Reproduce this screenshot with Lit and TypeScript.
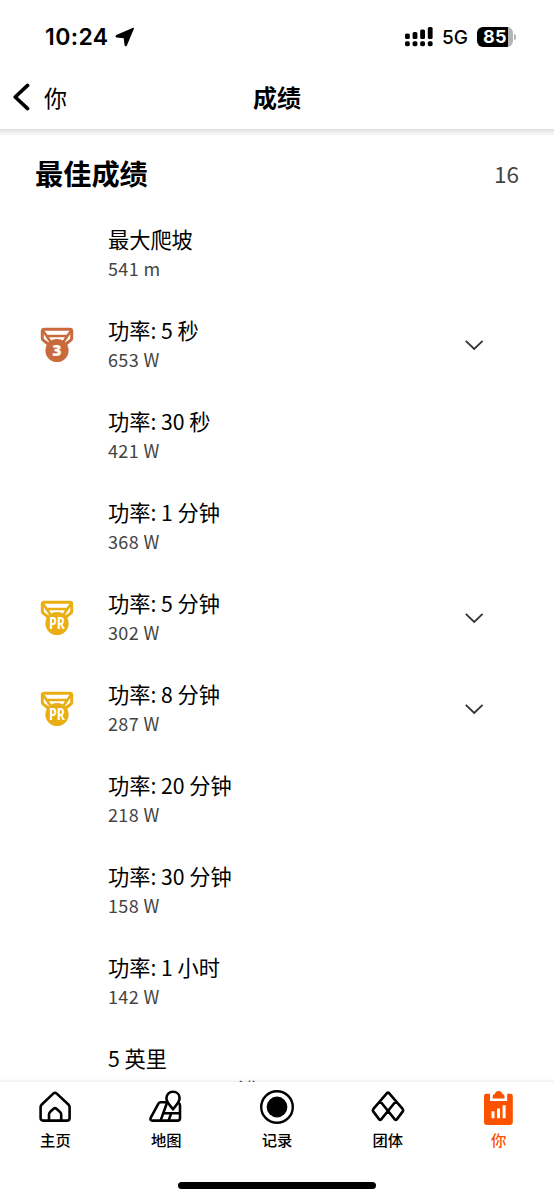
import { LitElement, html, svg, css, nothing } from "lit";
import { customElement, property } from "lit/decorators.js";

interface Effort {
  title: string;
  value: string;
  medal?: "3" | "PR";
}

const EFFORTS: Effort[] = [
  { title: "最大爬坡", value: "541 m" },
  { title: "功率: 5 秒", value: "653 W", medal: "3" },
  { title: "功率: 30 秒", value: "421 W" },
  { title: "功率: 1 分钟", value: "368 W" },
  { title: "功率: 5 分钟", value: "302 W", medal: "PR" },
  { title: "功率: 8 分钟", value: "287 W", medal: "PR" },
  { title: "功率: 20 分钟", value: "218 W" },
  { title: "功率: 30 分钟", value: "158 W" },
  { title: "功率: 1 小时", value: "142 W" },
  { title: "5 英里", value: "16:04 - 50.04 mi/h" },
];

@customElement("status-bar")
class StatusBar extends LitElement {
  static styles = css`
    :host { display: flex; height: 74px; align-items: center; padding: 0 38px 0 45px; box-sizing: border-box; font-family: Inter, sans-serif; color: #000; }
    .time { font-size: 23px; font-weight: 600; letter-spacing: 0.4px; }
    .arrow { margin-left: 6px; }
    .signal { margin-left: auto; }
    .net { font-size: 19px; font-weight: 500; margin: 0 9px 0 9px; }
    .batt { display: flex; align-items: center; }
    .cell { width: 36px; height: 20px; border-radius: 6px; background: linear-gradient(90deg, #000 31px, #b4b4b4 31px); color: #fff; font-size: 18px; font-weight: 700; line-height: 20px; text-align: center; letter-spacing: 0.3px; }
    .cap { width: 2px; height: 6px; margin-left: 1px; border-radius: 0 2px 2px 0; background: #b4b4b4; }
  `;
  render() {
    const xs = [0, 7.6, 15.2, 22.8];
    const tops = [6.5, 5, 2.5, 0];
    return html`
      <span class="time">10:24</span>
      <svg class="arrow" width="20" height="20" viewBox="0 0 20 20"><path d="M18.4 1.3 11.3 18.2Q10.7 19.2 10.2 18.2L9.3 10.7 1.6 9.8Q.6 9.3 1.6 8.7Z" fill="#000" stroke="#000" stroke-width="1.3" stroke-linejoin="round" /></svg>
      <svg class="signal" width="28" height="20" viewBox="0 0 28 20">
        ${xs.map((x, i) => svg`<rect x=${x} y=${tops[i]} width="4.8" height=${12 - tops[i]} rx="1.5"/><rect x=${x} y="14.2" width="4.8" height="5" rx="1.6"/>`)}
      </svg>
      <span class="net">5G</span>
      <span class="batt"><span class="cell">85</span><span class="cap"></span></span>
    `;
  }
}

@customElement("medal-icon")
class MedalIcon extends LitElement {
  @property() kind: "3" | "PR" = "3";
  static styles = css`
    :host { display: block; width: 34px; height: 36px; }
    svg { display: block; }
    text { font-family: "Open Sans", sans-serif; font-weight: 800; text-anchor: middle; fill: #fff; }
    .third { color: #c96a3c; }
    .pr { color: #e9ae13; }
    .n { font-size: 16px; }
    .p { font-size: 15.5px; font-weight: 700; }
  `;
  render() {
    const third = this.kind === "3";
    return html`<svg class=${third ? "third" : "pr"} width="34" height="36" viewBox="0 0 34 36">
      <path d="M10 18.5 3.2 13.2Q2.3 12.4 2.3 11.2V4Q2.3 2.3 4 2.3H30Q31.7 2.3 31.7 4V11.2Q31.7 12.4 30.8 13.2L24 18.5" fill="none" stroke="currentColor" stroke-width="3" />
      <path d="M3 3.6 6.6 9H27.4L31 3.6M6.6 9 12 17M27.4 9 22 17" fill="none" stroke="currentColor" stroke-width="2.6" />
      <circle cx="17" cy="23.5" r="11.6" fill="currentColor" />
      ${third
        ? svg`<text class="n" x="17" y="29">3</text>`
        : svg`<text class="p" x="17" y="29.2" textLength="16" lengthAdjust="spacingAndGlyphs">PR</text>`}
    </svg>`;
  }
}

@customElement("effort-row")
class EffortRow extends LitElement {
  @property({ attribute: false }) effort!: Effort;
  static styles = css`
    :host { display: grid; grid-template-columns: 68px 1fr auto; align-items: center; height: 91px; padding: 0 70px 0 40px; box-sizing: border-box; }
    .body { display: flex; flex-direction: column; }
    .title { font-size: 21.2px; line-height: 30px; color: #000; white-space: pre; }
    .value { font-size: 18px; line-height: 29px; letter-spacing: 0.35px; color: #444; white-space: pre; }
    .chev { display: block; }
  `;
  render() {
    const e = this.effort;
    return html`
      <div>${e.medal ? html`<medal-icon .kind=${e.medal}></medal-icon>` : nothing}</div>
      <div class="body"><span class="title">${e.title}</span><span class="value">${e.value}</span></div>
      ${e.medal
        ? html`<svg class="chev" width="20" height="12" viewBox="0 0 20 12"><path d="M1.8 1.8 10.2 10 18.6 1.8" fill="none" stroke="#333" stroke-width="1.8" /></svg>`
        : nothing}
    `;
  }
}

const s = (body: unknown) => html`<svg width="36" height="36" viewBox="0 0 36 36" fill="none" stroke="currentColor" stroke-width="2.6" stroke-linejoin="round">${body}</svg>`;

const TABS = [
  { label: "主页", icon: s(svg`<path d="M18 3.8Q18.8 3.8 19.5 4.4L31.4 15.5Q32.6 16.7 32.6 18V29Q32.6 31.6 30 31.6H6.2Q3.6 31.6 3.6 29V18Q3.6 16.7 4.8 15.5L16.5 4.4Q17.2 3.8 18 3.8ZM12 31.6V25.5Q12 24 13.2 22.8L16.6 19.7Q18 18.6 19.4 19.7L22.8 22.8Q24.2 24 24.2 25.5V31.6"/>`) },
  { label: "地图", icon: s(svg`<path d="M19.2 13.3H12.6Q11.2 13.3 10.4 14.6L2.8 28.6Q1.5 31.6 4.6 31.6H29.4Q32 31.6 32 29V16.5Q32 15 30.8 14.2M19.2 13.3 12.6 31.6M15.4 24.3H32M23.2 24.3 20.6 31.6"/><path d="M25 2.8C28.8 2.8 31.6 5.5 31.6 9.2 31.6 13.2 27.6 16.5 25 20.4 22.4 16.5 18.4 13.2 18.4 9.2 18.4 5.5 21.2 2.8 25 2.8Z" fill="#fff"/>`) },
  { label: "记录", icon: s(svg`<circle cx="18" cy="18" r="15.8" stroke-width="2.4"/><circle cx="18" cy="18" r="10.4" fill="currentColor" stroke="none"/>`) },
  { label: "团体", icon: s(svg`<path d="M17.2 3.9Q18 3 18.8 3.9L32.8 20.2Q33.7 21.3 32.8 22.4L26.8 30.4Q25.8 31.6 24.8 30.4L10.2 12.2M17.2 3.9 3.2 20.2Q2.3 21.3 3.2 22.4L9.2 30.4Q10.2 31.6 11.2 30.4L25.8 12.2"/>`) },
  { label: "你", icon: s(svg`<path d="M5 4.7H9V12H26.2V4.7H29.8Q31.8 4.7 31.8 6.9V33Q31.8 36 28.8 36H6Q3 36 3 33V6.9Q3 4.7 5 4.7Z" fill="currentColor" stroke="none"/><path d="M11.7 9.4V7.2Q11.7 5.2 13.7 5Q14.6 2 17.6 2T21.5 5Q23.5 5.2 23.5 7.2V9.4Z" fill="currentColor" stroke="none"/><path d="M12 29.3V22.3M17.5 29.3V19.5M23.1 29.3V16.2" stroke="#fff" stroke-width="3"/>`), active: true },
];

@customElement("tab-bar")
class TabBar extends LitElement {
  static styles = css`
    :host { display: block; position: relative; flex: none; height: 118px; background: #fff; box-shadow: 0 -1px 3px rgba(0, 0, 0, 0.09); box-sizing: border-box; }
    .tabs { display: grid; grid-template-columns: repeat(5, 1fr); height: 97px; }
    .tab { display: flex; flex-direction: column; align-items: center; padding-top: 6.5px; color: #000; font-size: 15.3px; font-weight: 500; line-height: 22px; gap: 3.5px; }
    .active { color: #fc5200; }
    .tab svg { display: block; }
    .home { width: 198px; height: 7px; border-radius: 4px; background: #000; margin: 3px auto 0; }
  `;
  render() {
    return html`
      <div class="tabs">
        ${TABS.map((t) => html`<div class="tab ${t.active ? "active" : ""}">${t.icon}<span>${t.label}</span></div>`)}
      </div>
      <div class="home"></div>
    `;
  }
}

@customElement("app-root")
class AppRoot extends LitElement {
  static styles = css`
    :host { display: flex; flex-direction: column; height: 1200px; overflow: hidden; background: #fff; font-family: "Noto Sans CJK SC", sans-serif; color: #000; }
    .nav { display: grid; grid-template-columns: 1fr auto 1fr; align-items: center; height: 55px; flex: none; padding: 0 12px 9px; box-sizing: border-box; }
    .back { display: flex; align-items: center; gap: 14px; font-size: 23px; line-height: 34px; }
    .name { font-size: 24px; line-height: 34px; font-weight: 700; }
    .list { flex: 1; min-height: 0; overflow: hidden; border-top: 1px solid #e0e0e0; background: linear-gradient(#e4e4e4, #fff 6px); }
    .head { display: flex; align-items: center; justify-content: space-between; height: 78px; padding: 8px 35px 0; box-sizing: border-box; }
    .heading { font-size: 28.2px; line-height: 40px; font-weight: 700; }
    .count { font-size: 22.5px; line-height: 34px; color: #444; }
  `;
  render() {
    return html`
      <status-bar></status-bar>
      <div class="nav">
        <div class="back">
          <svg width="18" height="28" viewBox="0 0 18 28"><path d="M15.6 2.4 3.2 14 15.6 25.6" fill="none" stroke="#000" stroke-width="3.6" stroke-linecap="round" stroke-linejoin="round" /></svg>
          <span>你</span>
        </div>
        <div class="name">成绩</div>
      </div>
      <div class="list">
        <div class="head"><span class="heading">最佳成绩</span><span class="count">16</span></div>
        ${EFFORTS.map((e) => html`<effort-row .effort=${e}></effort-row>`)}
      </div>
      <tab-bar></tab-bar>
    `;
  }
}
